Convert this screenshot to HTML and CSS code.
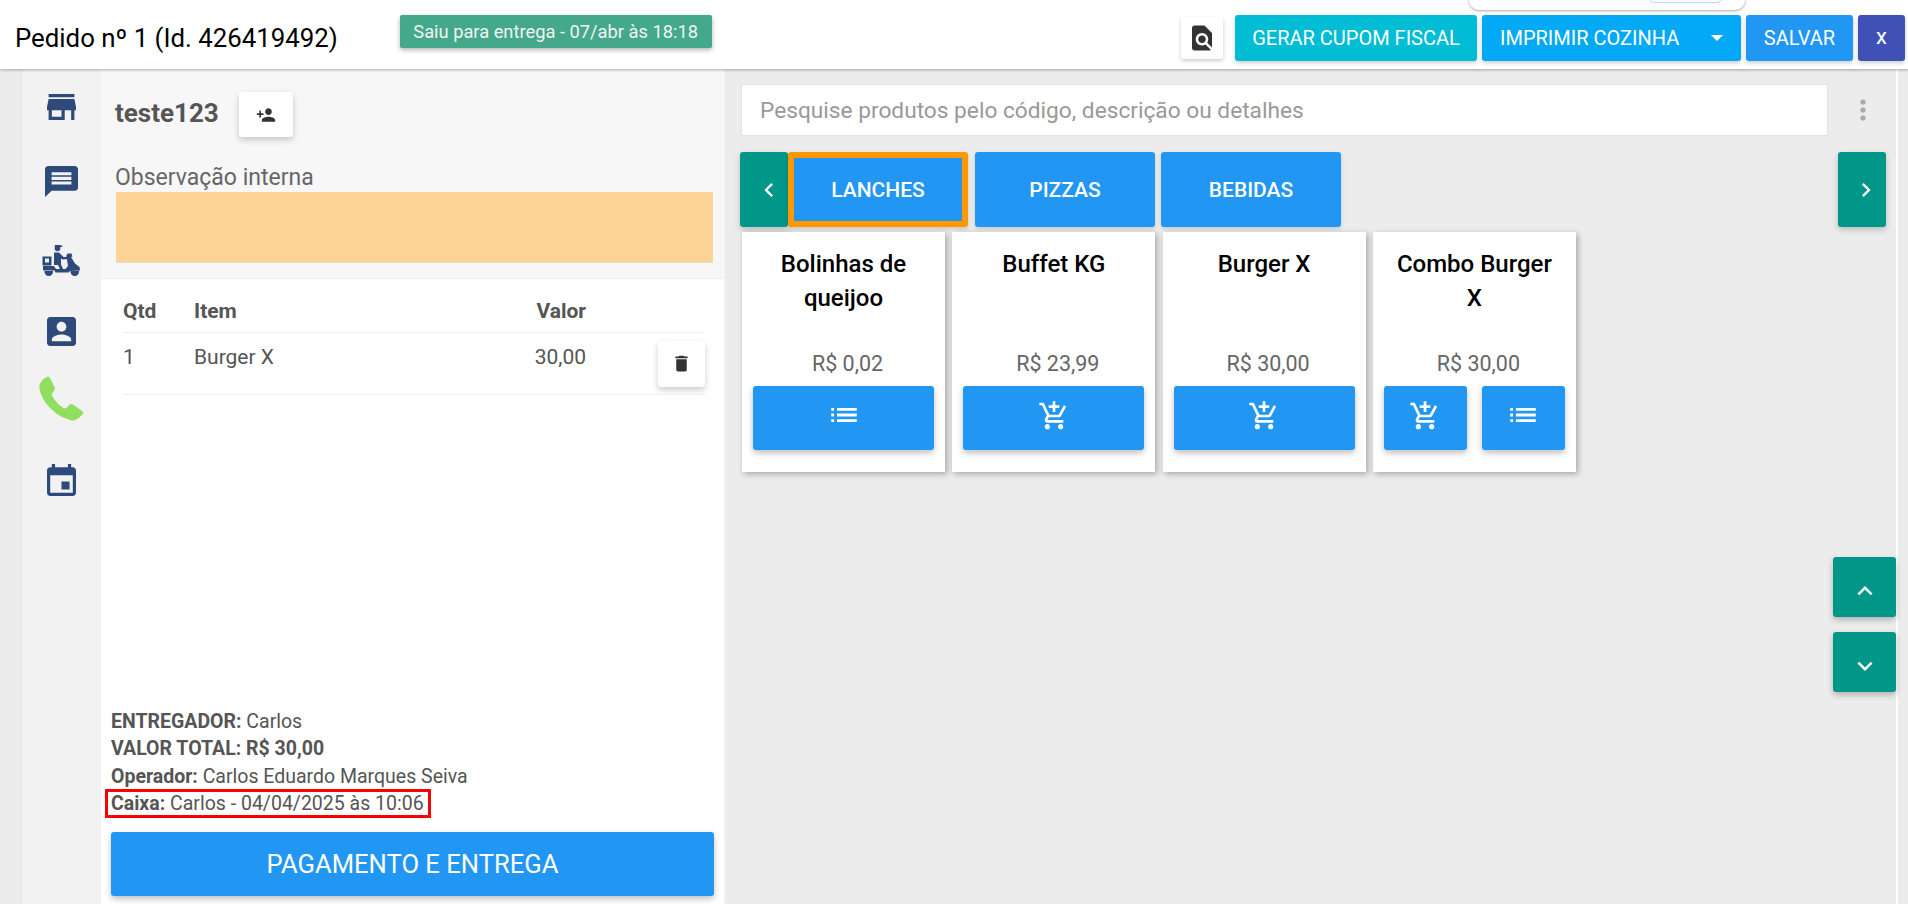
FILE: index.html
```html
<!DOCTYPE html>
<html lang="pt-BR">
<head>
<meta charset="utf-8">
<title>Pedido</title>
<link rel="stylesheet" href="styles.css">
</head>
<body>
<div class="popup"><span class="popup-pill"></span></div>
<header class="topbar">
  <h1 class="title">Pedido nº 1 (Id. 426419492)</h1>
  <div class="status">Saiu para entrega - 07/abr às 18:18</div>
  <div class="actions">
    <button class="btn-find"><svg class="ic-find" viewBox="0 0 24 24"><path d="M20 19.59V8l-6-6H6c-1.1 0-1.99.9-1.99 2L4 20c0 1.1.89 2 2 2h12c.45 0 .85-.15 1.19-.4l-4.43-4.43c-.8.52-1.74.83-2.76.83-2.76 0-5-2.24-5-5s2.24-5 5-5 5 2.24 5 5c0 1.02-.31 1.96-.83 2.75L20 19.59zM9 13c0 1.66 1.34 3 3 3s3-1.34 3-3-1.34-3-3-3-3 1.34-3 3z"/></svg></button>
    <button class="act act-fiscal">GERAR CUPOM FISCAL</button>
    <button class="act act-print"><span>IMPRIMIR COZINHA</span><i class="caret"></i></button>
    <button class="act act-save">SALVAR</button>
    <button class="act act-close">x</button>
  </div>
</header>
<main class="body">
  <div class="gutter"></div>
  <nav class="side">
    <svg class="nav nav-store" viewBox="3 4 18 16" preserveAspectRatio="none"><path d="M20 4H4v2h16V4zm1 10v-2l-1-5H4l-1 5v2h1v6h10v-6h4v6h2v-6h1zm-9 4H6v-4h6v4z"/></svg>
    <svg class="nav nav-chat" viewBox="2 2 20 20" preserveAspectRatio="none"><path d="M20 2H4c-1.1 0-1.99.9-1.99 2L2 22l4-4h14c1.1 0 2-.9 2-2V4c0-1.1-.9-2-2-2zm-2 12H6v-2h12v2zm0-3H6V9h12v2zm0-3H6V6h12v2z"/></svg>
    <svg class="nav nav-moto" viewBox="0 0 38 34"><circle cx="15.500" cy="4.500" r="2.800"/><path d="M13 1h5.500l2.500 1.400-3 .8h-5.500z"/><path d="M12 8.500h5l4.500 4.500h4.500v2l-5.500.5-1.500-1v6l2.500 5.500h-3l-2.500-5h-4z"/><path d="M.5 12.500h9v9h-9zM3 14.500v4h4v-4z" fill-rule="evenodd"/><path d="M25.500 9.500h4l1 3-1.500.5 4 6.500 4.500 3.500.5 3.500-10 .5-1.500 1.500h-13l-1-2h-11.500v-4.500h11l2 3h9.500l2.500-3-1.500-9.500h-.5z"/><path d="M2.500 27h8.500a4.300 4.300 0 1 1-8.500 0zM28.500 27h8.500a4.300 4.300 0 1 1-8.500 0z"/></svg>
    <svg class="nav nav-contact" viewBox="3 3 18 18" preserveAspectRatio="none"><path d="M3 5v14c0 1.100.89 2 2 2h14c1.100 0 2-.9 2-2V5c0-1.100-.9-2-2-2H5c-1.110 0-2 .9-2 2zm12 4c0 1.660-1.340 3-3 3s-3-1.340-3-3 1.340-3 3-3 3 1.340 3 3zm-9 8c0-2 4-3.100 6-3.100s6 1.100 6 3.100v1H6v-1z"/></svg>
    <svg class="nav-phone" viewBox="0 0 45 45"><path d="M2 6Q5 2 8.500.5q1.500-.5 2.500 1.500l4.500 9q1 2.500-.5 4l-2 2.500q-.5 1.500.5 3 4.500 7.500 11 11.500 1.500 1 3-.2l3-3.100q1.500-1.300 3.500-.2l9 6.500q2 1.500 1 3-4 4.500-7.500 6-2.500 1-5.500 0Q16 40 6 26 0 16 .3 10 .5 8 2 6z"/></svg>
    <svg class="nav nav-cal" viewBox="3 1 18 20" preserveAspectRatio="none"><path d="M17 12h-5v5h5v-5zM16 1v2H8V1H6v2H5c-1.110 0-1.990.9-1.990 2L3 19c0 1.100.89 2 2 2h14c1.100 0 2-.9 2-2V5c0-1.100-.9-2-2-2h-1V1h-2zm3 18H5V8h14v11z"/></svg>
  </nav>
  <section class="order">
    <div class="order-top">
      <div class="client">
        <span class="client-name">teste123</span>
        <button class="btn-white btn-client"><svg class="ic-add" viewBox="0 0 24 24"><path d="M15 12c2.210 0 4-1.790 4-4s-1.790-4-4-4-4 1.790-4 4 1.790 4 4 4zm-9-2V7H4v3H1v2h3v3h2v-3h3v-2H6zm9 4c-2.670 0-8 1.340-8 4v2h16v-2c0-2.660-5.330-4-8-4z"/></svg></button>
      </div>
      <div class="note-label">Observação interna</div>
      <div class="note"></div>
    </div>
    <table class="items">
      <thead>
        <tr><th class="c-qtd">Qtd</th><th class="c-item">Item</th><th class="c-val">Valor</th><th class="c-act"></th></tr>
      </thead>
      <tbody>
        <tr>
          <td class="c-qtd">1</td><td class="c-item">Burger X</td><td class="c-val">30,00</td>
          <td class="c-act"><button class="btn-white btn-del"><svg class="ic-del" viewBox="0 0 24 24"><path d="M6 19c0 1.100.9 2 2 2h8c1.100 0 2-.9 2-2V7H6v12zM19 4h-3.500l-1-1h-5l-1 1H5v2h14V4z"/></svg></button></td>
        </tr>
      </tbody>
    </table>
    <div class="summary">
      <div><b>ENTREGADOR:</b> Carlos</div>
      <div><b>VALOR TOTAL: R$ 30,00</b></div>
      <div><b>Operador:</b> Carlos Eduardo Marques Seiva</div>
      <div class="caixa"><b>Caixa:</b> Carlos - 04/04/2025 às 10:06</div>
    </div>
    <button class="pay">PAGAMENTO E ENTREGA</button>
  </section>
  <section class="catalog">
    <div class="search-row">
      <div class="search">Pesquise produtos pelo código, descrição ou detalhes</div>
      <svg class="kebab" viewBox="0 0 6 22"><circle cx="3" cy="3" r="2.600"/><circle cx="3" cy="11" r="2.600"/><circle cx="3" cy="19" r="2.600"/></svg>
    </div>
    <div class="tabs">
      <button class="arrow"><svg class="ic-chev" viewBox="0 0 24 24"><path d="M15.410 7.410L14 6l-6 6 6 6 1.410-1.410L10.830 12z"/></svg></button>
      <button class="tab tab-on">LANCHES</button>
      <button class="tab">PIZZAS</button>
      <button class="tab">BEBIDAS</button>
      <button class="arrow arrow-next"><svg class="ic-chev" viewBox="0 0 24 24"><path d="M10 6L8.590 7.410 13.170 12l-4.580 4.590L10 18l6-6z"/></svg></button>
    </div>
    <div class="cards">
      <article class="card">
        <h2 class="card-name">Bolinhas de queijoo</h2>
        <div class="price">R$ 0,02</div>
        <div class="card-btns"><button class="cbtn"><svg class="ic-list" viewBox="0 0 24 24"><path d="M3 13h2v-2H3v2zm0 4h2v-2H3v2zm0-8h2V7H3v2zm4 4h14v-2H7v2zm0 4h14v-2H7v2zM7 7v2h14V7H7z"/></svg></button></div>
      </article>
      <article class="card">
        <h2 class="card-name">Buffet KG</h2>
        <div class="price">R$ 23,99</div>
        <div class="card-btns"><button class="cbtn"><svg class="ic-cart" viewBox="0 0 24 24"><path d="M11 9h2V6h3V4h-3V1h-2v3H8v2h3v3zm-4 9c-1.100 0-1.990.9-1.990 2S5.900 22 7 22s2-.9 2-2-.9-2-2-2zm10 0c-1.100 0-1.990.9-1.990 2s.89 2 1.990 2 2-.9 2-2-.9-2-2-2zm-9.830-3.250l.03-.12.9-1.630h7.450c.75 0 1.410-.41 1.750-1.030l3.860-7.010L19.420 4h-.01l-1.100 2-2.760 5H8.530l-.13-.27L6.160 6l-.95-2-.94-2H1v2h2l3.600 7.590-1.350 2.450c-.16.28-.25.61-.25.96 0 1.100.9 2 2 2h12v-2H7.420c-.13 0-.25-.11-.25-.25z"/></svg></button></div>
      </article>
      <article class="card">
        <h2 class="card-name">Burger X</h2>
        <div class="price">R$ 30,00</div>
        <div class="card-btns"><button class="cbtn"><svg class="ic-cart" viewBox="0 0 24 24"><path d="M11 9h2V6h3V4h-3V1h-2v3H8v2h3v3zm-4 9c-1.100 0-1.990.9-1.990 2S5.900 22 7 22s2-.9 2-2-.9-2-2-2zm10 0c-1.100 0-1.990.9-1.990 2s.89 2 1.990 2 2-.9 2-2-.9-2-2-2zm-9.830-3.250l.03-.12.9-1.630h7.450c.75 0 1.410-.41 1.750-1.030l3.860-7.010L19.420 4h-.01l-1.100 2-2.760 5H8.530l-.13-.27L6.160 6l-.95-2-.94-2H1v2h2l3.600 7.590-1.350 2.450c-.16.28-.25.61-.25.96 0 1.100.9 2 2 2h12v-2H7.420c-.13 0-.25-.11-.25-.25z"/></svg></button></div>
      </article>
      <article class="card">
        <h2 class="card-name">Combo Burger X</h2>
        <div class="price">R$ 30,00</div>
        <div class="card-btns">
          <button class="cbtn"><svg class="ic-cart" viewBox="0 0 24 24"><path d="M11 9h2V6h3V4h-3V1h-2v3H8v2h3v3zm-4 9c-1.100 0-1.990.9-1.990 2S5.900 22 7 22s2-.9 2-2-.9-2-2-2zm10 0c-1.100 0-1.990.9-1.990 2s.89 2 1.990 2 2-.9 2-2-.9-2-2-2zm-9.830-3.250l.03-.12.9-1.630h7.450c.75 0 1.410-.41 1.750-1.030l3.860-7.010L19.420 4h-.01l-1.100 2-2.760 5H8.530l-.13-.27L6.160 6l-.95-2-.94-2H1v2h2l3.600 7.590-1.350 2.450c-.16.28-.25.61-.25.96 0 1.100.9 2 2 2h12v-2H7.420c-.13 0-.25-.11-.25-.25z"/></svg></button>
          <button class="cbtn"><svg class="ic-list" viewBox="0 0 24 24"><path d="M3 13h2v-2H3v2zm0 4h2v-2H3v2zm0-8h2V7H3v2zm4 4h14v-2H7v2zm0 4h14v-2H7v2zM7 7v2h14V7H7z"/></svg></button>
        </div>
      </article>
    </div>
    <div class="scrollers">
      <button class="scroller"><svg class="ic-scroll" viewBox="0 0 24 24"><path d="M12 8l-6 6 1.410 1.410L12 10.830l4.590 4.580L18 14z"/></svg></button>
      <button class="scroller"><svg class="ic-scroll" viewBox="0 0 24 24"><path d="M16.590 8.590L12 13.170 7.410 8.590 6 10l6 6 6-6z"/></svg></button>
    </div>
  </section>
</main>
</body>
</html>
```

FILE: styles.css
```css
* { box-sizing: border-box; }
html, body { margin: 0; height: 100%; }
body {
  font-family: Roboto, "Liberation Sans", sans-serif;
  height: 904px;
  overflow: hidden;
  display: flex;
  flex-direction: column;
  background: #ececec;
  color: #555;
  position: relative;
}
button { font-family: inherit; border: 0; padding: 0; cursor: pointer; }
svg { display: block; }

.popup {
  position: absolute; z-index: 5; left: 1469px; top: -10px;
  width: 276px; height: 20px; background: #fff;
  border-radius: 10px; box-shadow: 0 1px 3px rgba(0,0,0,.35);
}
.popup-pill {
  position: absolute; left: 179px; top: 0; width: 75px; height: 13px;
  border: 1px solid #bcd3f5; border-radius: 8px;
}

.topbar {
  height: 69px; flex: none; background: #fff; position: relative; z-index: 3;
  box-shadow: 0 1px 3px rgba(0,0,0,.3);
  display: flex; align-items: flex-start;
}
.title { margin: 22px 0 0 15px; font-size: 25.800px; line-height: 32px; font-weight: 400; color: #000; white-space: nowrap; }
.status {
  margin: 15px 0 0 62px; width: 312px; height: 33px; background: #43a98a; color: #f2f2f2;
  border-radius: 2px; font-size: 18.300px; line-height: 33px; text-align: center;
  box-shadow: 0 2px 5px rgba(0,0,0,.3);
}
.actions { margin-left: auto; display: flex; align-items: flex-start; padding: 15px 3px 0 0; }
.btn-find {
  width: 42px; height: 42px; margin: 2px 12px 0 0; background: #fff; border-radius: 3px;
  display: flex; align-items: center; justify-content: center;
  box-shadow: 0 2px 4px rgba(0,0,0,.2);
}
.ic-find { width: 30px; height: 30px; fill: #333; }
.act {
  height: 46px; color: #fff; font-size: 20px; border-radius: 3px;
  box-shadow: 0 2px 4px rgba(0,0,0,.2); display: flex; align-items: center; justify-content: center;
}
.act-fiscal { width: 242px; background: #00bcd4; margin-right: 5px; }
.act-print { width: 259px; background: #03a9f4; margin-right: 5px; justify-content: space-between; padding: 0 18px; }
.caret { border: 6px solid transparent; border-top-color: #fff; border-bottom: 0; width: 0; height: 0; }
.act-save { width: 107px; background: #2196f3; margin-right: 5px; }
.act-close { width: 47px; background: #3f51b5; font-size: 22px; padding-bottom: 3px; }

.body { flex: 1; display: flex; min-height: 0; }
.gutter { width: 22px; flex: none; background: #ececec; border-right: 1px solid #e4e4e4; }
.side { width: 79px; flex: none; background: #f2f2f2; display: flex; flex-direction: column; align-items: flex-start; padding-left: 24px; }
.nav { fill: #2d4a7a; }
.nav-store { width: 29px; height: 26px; margin: 25px 0 0 1px; }
.nav-chat { width: 33px; height: 31px; margin: 46px 0 0 -1px; }
.nav-moto { width: 38px; height: 34px; margin: 47px 0 0 -4px; }
.nav-contact { width: 29px; height: 29px; margin: 39px 0 0 1px; }
.nav-phone { width: 45px; height: 45px; margin: 30px 0 0 -7px; fill: #90df5f; }
.nav-cal { width: 29px; height: 32px; margin: 43px 0 0 1px; }

.order { width: 624px; flex: none; background: #fff; display: flex; flex-direction: column; border-right: 1px solid #f4f4f4; }
.order-top { height: 210px; flex: none; background: #f7f7f7; border-bottom: 1px solid #eee; padding: 23px 11px 0 15px; }
.client { display: flex; align-items: center; margin-left: -1px; }
.client-name { font-size: 26px; font-weight: 700; color: #555; width: 124px; padding-bottom: 3px; }
.btn-white { background: #fff; border-radius: 3px; display: flex; align-items: center; justify-content: center; box-shadow: 0 3px 6px rgba(0,0,0,.2); }
.btn-client { width: 54px; height: 45px; }
.ic-add { width: 20px; height: 20px; fill: #333; }
.note-label { margin: 26px 0 0 -1px; font-size: 23px; line-height: 29px; color: #666; }
.note { height: 71px; background: #fed497; border-bottom: 1px solid #e9dcc6; }

.items { width: 582px; margin-left: 22px; border-collapse: collapse; font-size: 21px; color: #555; table-layout: fixed; }
.items th { height: 53px; padding: 12px 0 0; font-weight: 700; text-align: left; border-bottom: 1px solid #eee; }
.items td { height: 62px; padding: 0 0 13px; border-bottom: 1px solid #eee; }
.c-qtd { width: 71px; }
.items .c-val { width: 100px; text-align: right; }
.c-act { width: 119px; }
.items td.c-act { padding: 0; vertical-align: top; }
.btn-del { width: 47px; height: 46px; margin: 8px 0 0 72px; }
.ic-del { width: 21px; height: 21px; fill: #333; }

.summary { margin: auto 0 0 10px; font-size: 19.500px; line-height: 27.500px; color: #555; }
.caixa { border: 3px solid #f00; width: 326px; height: 29px; line-height: 23px; margin: -1px 0 0 -6px; padding-left: 3px; white-space: nowrap; }
.pay {
  height: 64px; flex: none; margin: 14px 10px 8px; background: #2196f3; color: #fff;
  font-size: 25.600px; border-radius: 3px; box-shadow: 0 3px 6px rgba(0,0,0,.25);
}

.catalog { flex: 1; min-width: 0; position: relative; padding: 15px 0 0 15px; border-right: 2px solid #fff; margin-right: 10px; }
.search-row { display: flex; align-items: center; }
.search {
  width: 1087px; height: 52px; margin-left: 1px; background: #fff; border: 1px solid #e3e3e3; padding-left: 18px;
  font-size: 22.700px; line-height: 52px; color: #999; white-space: nowrap;
}
.kebab { width: 6px; height: 22px; margin-left: 32px; fill: #aaa; }
.tabs { display: flex; margin-top: 16px; width: 1146px; }
.arrow {
  width: 48px; height: 75px; background: #009688; border-radius: 3px; display: flex; align-items: center;
  justify-content: center; padding-left: 10px; box-shadow: 0 3px 6px rgba(0,0,0,.2);
}
.arrow-next { margin-left: auto; padding-left: 8px; }
.ic-chev { width: 28px; height: 28px; fill: #fff; }
.tab {
  width: 180px; height: 75px; background: #2196f3; color: #fff; font-size: 21px; font-weight: 500;
  border-radius: 3px; margin-right: 6px; box-shadow: 0 2px 4px rgba(0,0,0,.15);
}
.tab-on { border: 6px solid #ff9800; border-radius: 3px; margin-right: 7px; }
.cards { display: flex; gap: 7.300px; margin: 5px 0 0 2px; }
.card {
  width: 203px; height: 240px; background: #fff; padding: 15px 11px 0; position: relative;
  box-shadow: 2px 2px 6px rgba(0,0,0,.3); display: flex; flex-direction: column;
}
.card-name { margin: 0; height: 105px; font-size: 24px; line-height: 34px; font-weight: 500; color: #000; text-align: center; padding: 0 8px; }
.price { font-size: 21.500px; line-height: 24px; color: #666; text-align: center; padding-left: 8px; margin-bottom: 10px; }
.card-btns { display: flex; gap: 15px; }
.cbtn {
  flex: 1; height: 64px; background: #2196f3; border-radius: 3px; display: flex; align-items: flex-start;
  justify-content: center; box-shadow: 0 3px 6px rgba(0,0,0,.25);
}
.ic-list { width: 34px; height: 34px; fill: #fff; margin-top: 12px; }
.ic-cart { width: 32px; height: 32px; fill: #fff; margin-top: 14px; }
.scrollers { position: absolute; top: 488px; right: 0; display: flex; flex-direction: column; gap: 15px; }
.scroller {
  width: 63px; height: 60px; background: #009688; border-radius: 3px; display: flex; align-items: center;
  justify-content: center; padding-top: 7px; box-shadow: 0 3px 6px rgba(0,0,0,.25);
}
.ic-scroll { width: 30px; height: 30px; fill: #fff; }
```
